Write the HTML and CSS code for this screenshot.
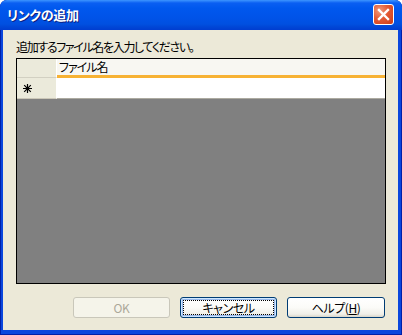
FILE: index.html
```html
<!DOCTYPE html>
<html lang="ja">
<head>
<meta charset="utf-8">
<link rel="stylesheet" href="styles.css">
</head>
<body>
<div class="window">
  <div class="titlebar">
    <span class="title">リンクの追加</span>
    <span class="close">
      <svg width="13" height="13" viewBox="0 0 13 13"><path d="M2 2 L11 11 M11 2 L2 11" stroke="#fff" stroke-width="2.4" stroke-linecap="square"/></svg>
    </span>
  </div>
  <div class="client">
    <div class="label">追加するファイル名を入力してください。</div>
    <div class="grid">
      <div class="hdr-row">
        <div class="corner"></div>
        <div class="col-hdr">ファイル名</div>
      </div>
      <div class="data-row">
        <div class="row-hdr">
          <svg width="9" height="9" viewBox="0 0 9 9"><path d="M4.5 0 V9 M0 4.5 H9 M1.2 1.2 L7.8 7.8 M7.8 1.2 L1.2 7.8" stroke="#000" stroke-width="1.2"/></svg>
        </div>
        <div class="cell"></div>
      </div>
      <div class="empty"></div>
    </div>
    <div class="buttons">
      <button class="btn disabled">OK</button>
      <button class="btn focused"><span class="focus">キャンセル</span></button>
      <button class="btn wide">ヘルプ(<u>H</u>)</button>
    </div>
  </div>
</div>
</body>
</html>
```

FILE: styles.css
```css
html, body {
  margin: 0;
  padding: 0;
  background: #ffffff;
}
body {
  font-family: "Noto Sans CJK JP", "Noto Sans", sans-serif;
  font-size: 12px;
  font-feature-settings: "palt";
}
.window {
  width: 402px;
  height: 335px;
  display: flex;
  flex-direction: column;
  background: #0a46dd;
  border-radius: 7px 7px 0 0;
  overflow: hidden;
  box-shadow: inset 0 0 0 1px #0020a8;
}
.titlebar {
  height: 30px;
  flex: none;
  display: flex;
  align-items: center;
  justify-content: space-between;
  padding: 0 8px 2px 7px;
  box-sizing: border-box;
  background: linear-gradient(to bottom, #3d95ff 0px, #0a5ff2 3px, #0058ee 8px, #0053e8 18px, #0050e0 24px, #0046d6 27px, #003dd0 30px);
}
.title {
  color: #fff;
  font-weight: bold;
  font-size: 13px;
  letter-spacing: -0.3px;
  text-shadow: 1px 1px 0 #0a1e80;
}
.close {
  width: 19px;
  height: 19px;
  border: 1px solid #fff;
  border-radius: 3px;
  background: radial-gradient(circle at 30% 30%, #f09a7c 0%, #e35a35 45%, #cc3a14 100%);
  display: flex;
  align-items: center;
  justify-content: center;
  margin-top: 1px;
}
.client {
  flex: 1;
  margin: 0 4px 5px 3px;
  background: #ece9d8;
  padding: 9px 12px 12px 13px;
  display: flex;
  flex-direction: column;
}
.label {
  height: 16px;
  line-height: 16px;
  color: #000;
  margin-bottom: 3px;
  letter-spacing: -1.35px;
}
.grid {
  height: 226px;
  flex: none;
  box-sizing: border-box;
  border: 1px solid #000;
  background: #808080;
  display: flex;
  flex-direction: column;
}
.hdr-row {
  display: flex;
  height: 19px;
  flex: none;
}
.corner {
  width: 40px;
  border-right: 1px solid #fff;
  background: #ebeadb;
  border-bottom: 1px solid #d2d0c2;
  box-sizing: border-box;
}
.col-hdr {
  flex: 1;
  background: #f8f7f2;
  border-bottom: 3px solid #f7b234;
  box-sizing: border-box;
  padding-left: 2px;
  line-height: 16px;
  color: #000;
  letter-spacing: -1px;
}
.data-row {
  display: flex;
  height: 21px;
  flex: none;
}
.row-hdr {
  width: 40px;
  background: #ebeadb;
  border-right: 1px solid #fff;
  border-bottom: 1px solid #cbc7b8;
  box-sizing: border-box;
  display: flex;
  align-items: center;
  padding-left: 6px;
}
.cell {
  flex: 1;
  background: #fff;
  border-bottom: 1px solid #acaaa0;
  box-sizing: border-box;
}
.empty {
  flex: 1;
}
.buttons {
  margin-top: 13px;
  display: flex;
  justify-content: flex-end;
  gap: 10px;
  padding-right: 1px;
}
.btn {
  width: 97px;
  height: 21px;
  box-sizing: border-box;
  border: 1px solid #003c74;
  border-radius: 3px;
  background: linear-gradient(to bottom, #ffffff 0%, #fbfbf8 50%, #f0efe8 85%, #d8d5c9 100%);
  font-family: "Noto Sans CJK JP", "Noto Sans", sans-serif;
  font-feature-settings: "palt";
  font-size: 12px;
  letter-spacing: -0.4px;
  color: #000;
  padding: 0;
  display: flex;
  align-items: center;
  justify-content: center;
  line-height: 14px;
}
.btn.wide {
  width: 98px;
}
.btn.disabled {
  border-color: #c9c7ba;
  background: #f5f4ea;
  color: #aca899;
}
.btn.focused {
  box-shadow: inset 0 0 0 1px #cee7ff, inset 0 0 0 2px #98b8ea;
  padding: 2px;
}
.focus {
  flex: 1;
  align-self: stretch;
  border: 1px dotted #000;
  display: flex;
  align-items: center;
  justify-content: center;
}
```
